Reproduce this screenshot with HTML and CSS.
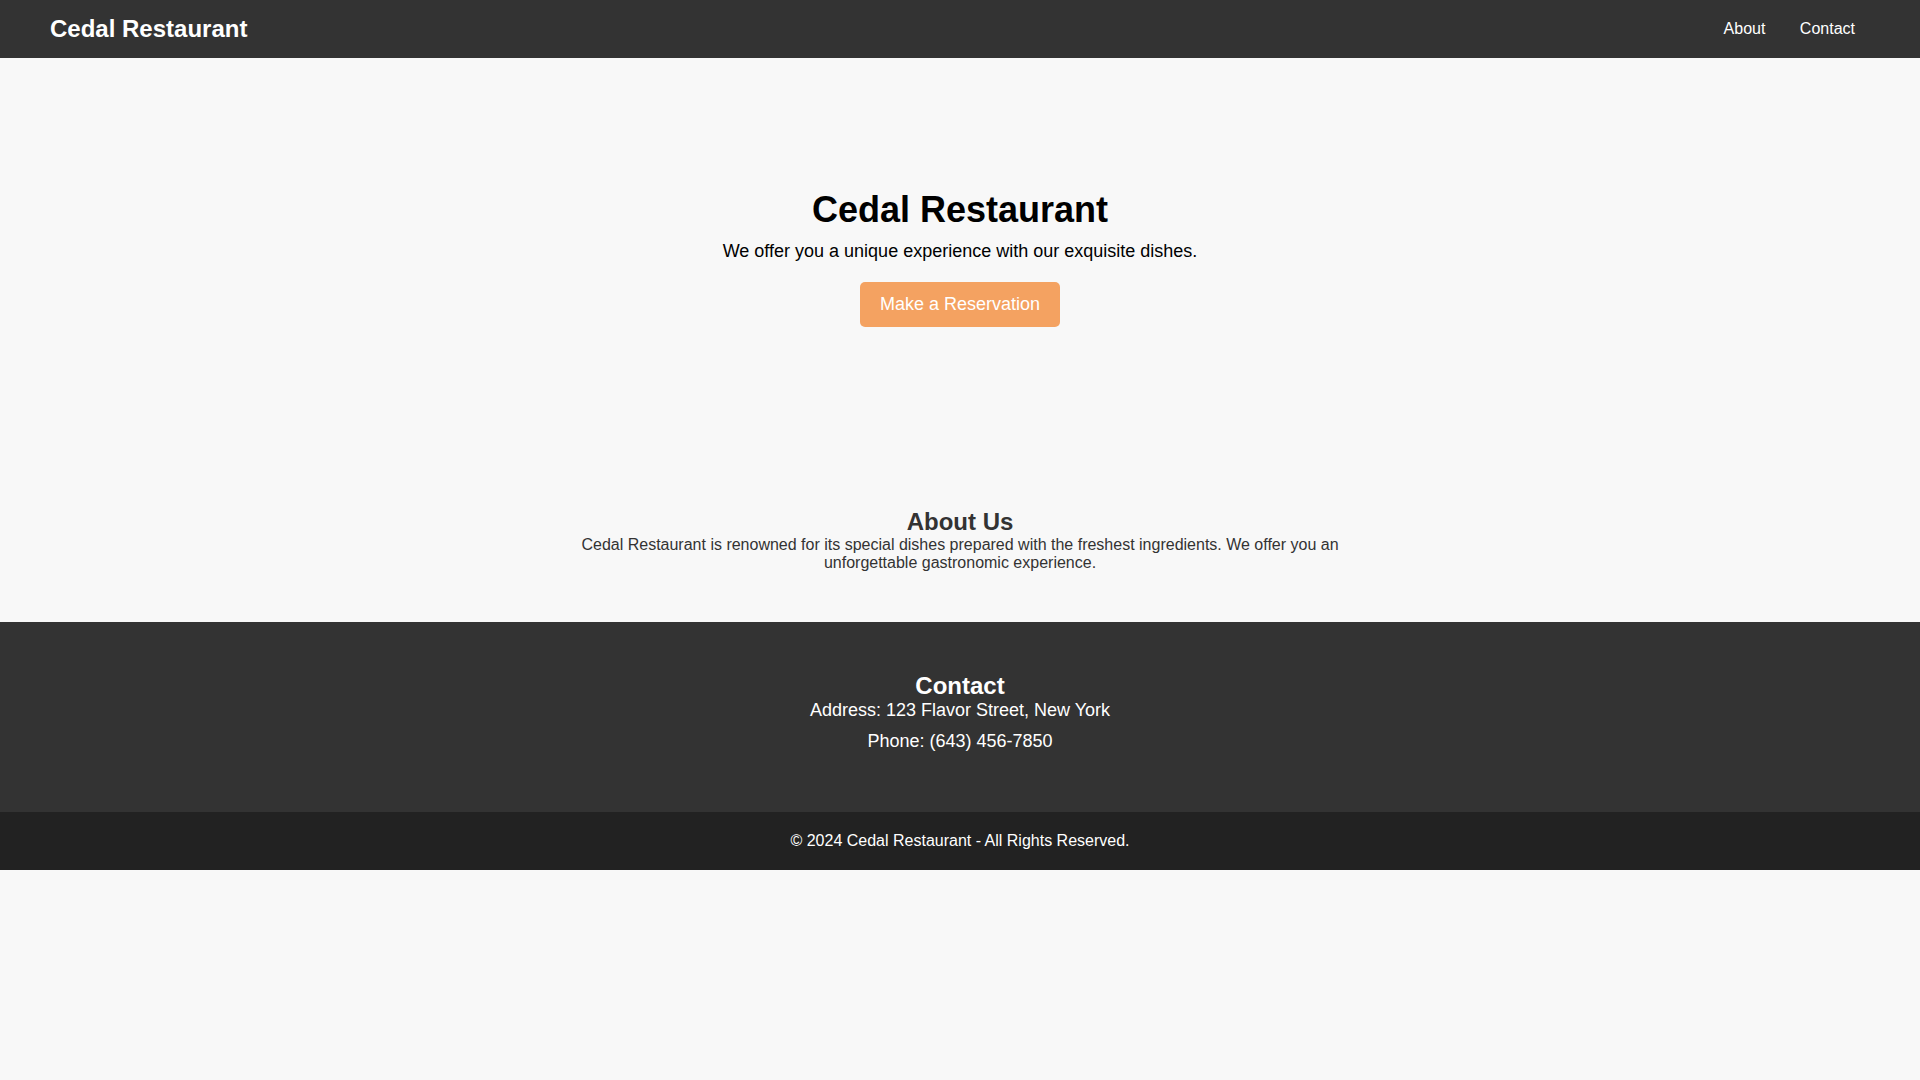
FILE: index.html
```html
<!DOCTYPE html>
<html lang="en">
<head>
<meta charset="utf-8">
<title>Cedal Restaurant</title>
<link rel="stylesheet" href="styles.css">
</head>
<body>
<header class="site-header">
  <div class="brand">Cedal Restaurant</div>
  <nav class="nav">
    <a href="#about">About</a>
    <a href="#contact">Contact</a>
  </nav>
</header>
<section class="hero">
  <h1>Cedal Restaurant</h1>
  <p>We offer you a unique experience with our exquisite dishes.</p>
  <a class="btn" href="#contact">Make a Reservation</a>
</section>
<section class="about" id="about">
  <h2>About Us</h2>
  <p>Cedal Restaurant is renowned for its special dishes prepared with the freshest ingredients. We offer you an unforgettable gastronomic experience.</p>
</section>
<section class="contact" id="contact">
  <h2>Contact</h2>
  <p>Address: 123 Flavor Street, New York</p>
  <p>Phone: (643) 456-7850</p>
</section>
<footer class="site-footer">
  <p>© 2024 Cedal Restaurant - All Rights Reserved.</p>
</footer>
</body>
</html>
```
FILE: styles.css
```css
* { box-sizing: border-box; }
body {
  margin: 0;
  font-family: "Liberation Sans", Arial, sans-serif;
  background: #f8f8f8;
  color: #333;
}
.site-header {
  background: #333;
  color: #fff;
  padding: 15px 50px;
  display: flex;
  justify-content: space-between;
  align-items: center;
}
.brand {
  font-size: 24px;
  font-weight: bold;
}
.nav a {
  color: #fff;
  text-decoration: none;
  font-size: 16px;
  margin: 0 15px;
}
.hero {
  height: 400px;
  display: flex;
  flex-direction: column;
  align-items: center;
  justify-content: center;
  text-align: center;
  color: #000;
}
.hero h1 {
  font-size: 36px;
  margin: 0 0 10px;
}
.hero p {
  font-size: 18px;
  margin: 0 0 20px;
}
.btn {
  display: inline-block;
  background: #f4a261;
  color: #fff;
  text-decoration: none;
  font-size: 18px;
  padding: 12px 20px;
  border-radius: 5px;
}
.about {
  max-width: 800px;
  margin: 0 auto;
  padding: 50px 20px;
  text-align: center;
  color: #333;
}
.about h2 {
  font-size: 24px;
  margin: 0;
}
.about p {
  font-size: 16px;
  margin: 0;
}
.contact {
  background: #333;
  color: #fff;
  text-align: center;
  padding: 50px 20px;
}
.contact h2 {
  font-size: 24px;
  margin: 0;
}
.contact p {
  font-size: 18px;
  margin: 0 0 10px;
}
.site-footer {
  background: #222;
  color: #fff;
  text-align: center;
  padding: 20px;
}
.site-footer p {
  margin: 0;
  font-size: 16px;
}
```
